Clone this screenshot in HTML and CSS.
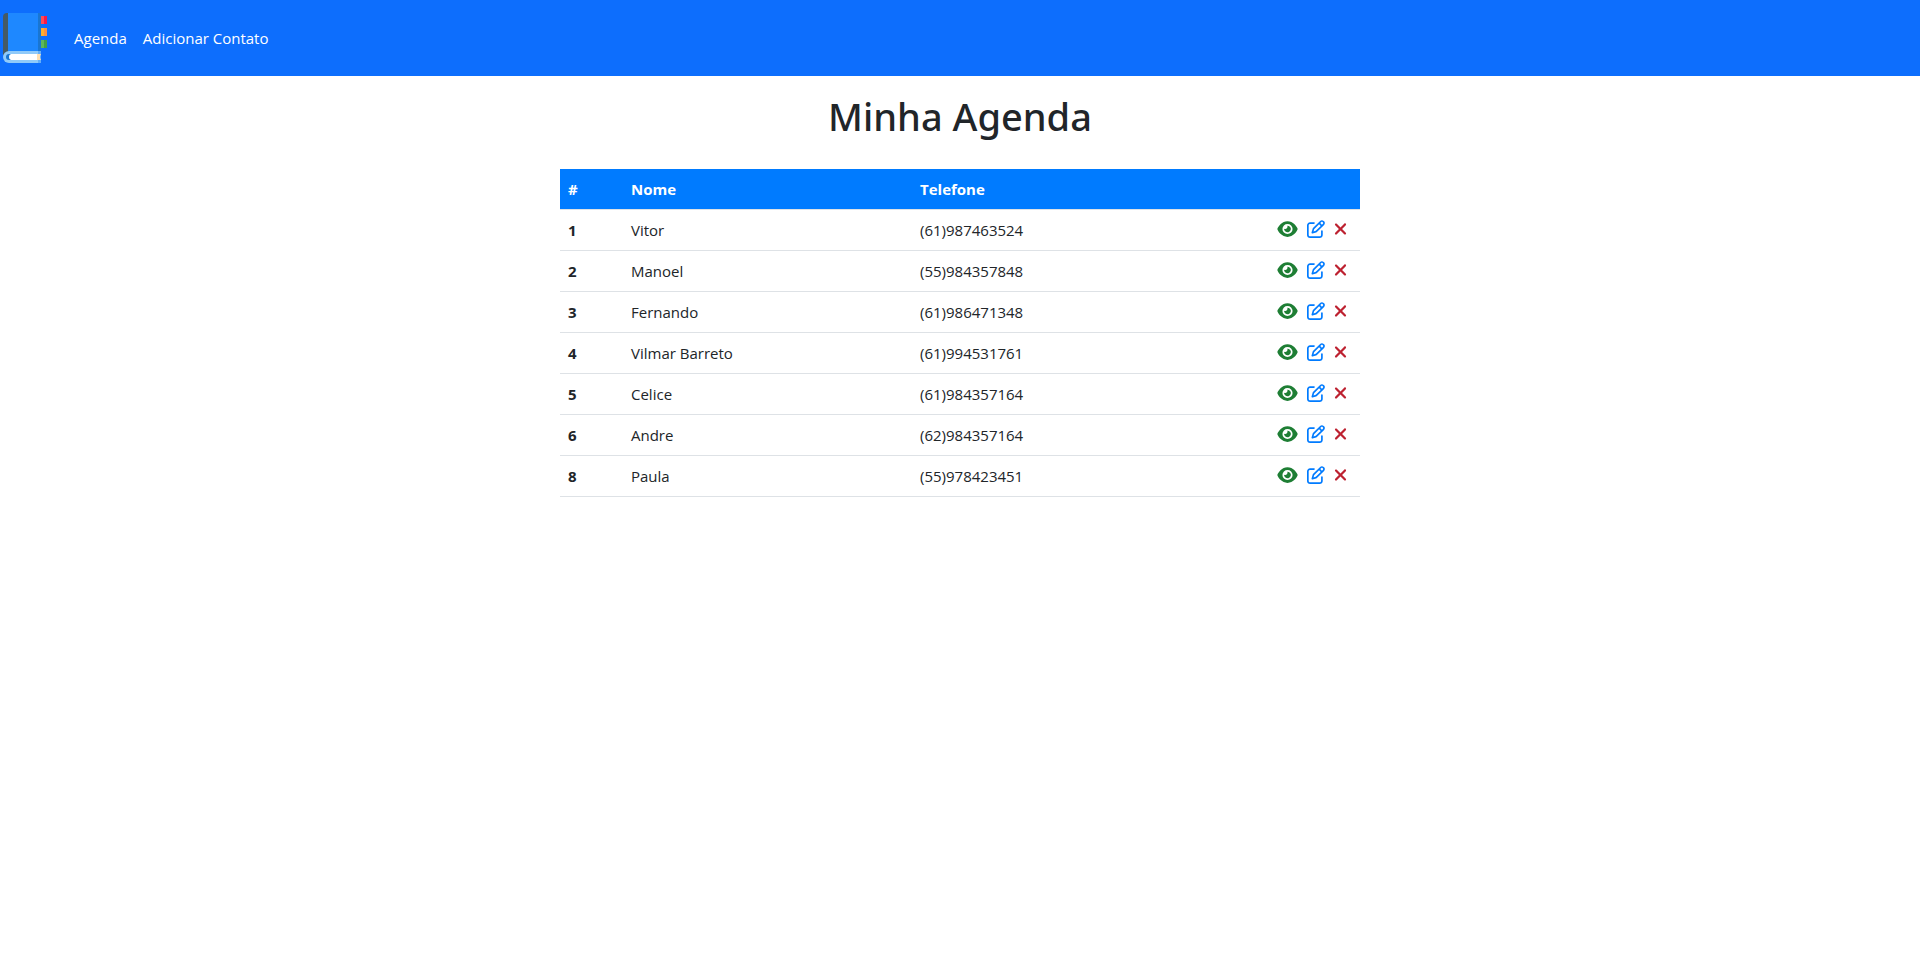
FILE: index.html
```html
<!DOCTYPE html>
<html lang="pt-br">
<head>
<meta charset="utf-8">
<meta name="viewport" content="width=device-width, initial-scale=1">
<title>Minha Agenda</title>
<link rel="stylesheet" href="styles.css">
</head>
<body>
<svg class="sprite" aria-hidden="true">
  <symbol id="eye" viewBox="0 0 576 512"><path d="M288 32c-80.8 0-145.5 36.8-192.6 80.6C48.6 156 17.3 208 2.5 243.7c-3.3 7.9-3.3 16.7 0 24.6C17.3 304 48.6 356 95.4 399.4C142.5 443.2 207.2 480 288 480s145.5-36.8 192.6-80.6c46.8-43.5 78.1-95.4 93-131.1c3.3-7.9 3.3-16.7 0-24.6c-14.9-35.7-46.2-87.7-93-131.1C433.5 68.8 368.8 32 288 32zM144 256a144 144 0 1 1 288 0 144 144 0 1 1 -288 0zm144-64c0 35.3-28.7 64-64 64c-7.1 0-13.9-1.2-20.3-3.3c-5.5-1.8-11.9 1.6-11.7 7.4c.3 6.9 1.3 13.8 3.2 20.7c13.7 51.2 66.4 81.6 117.6 67.9s81.6-66.4 67.9-117.6c-11.1-41.5-47.8-69.4-88.6-71.1c-5.8-.2-9.2 6.1-7.4 11.7c2.1 6.4 3.3 13.2 3.3 20.3z"/></symbol>
  <symbol id="edit" viewBox="0 0 512 512"><path d="M441 58.9L453.1 71c9.4 9.4 9.4 24.6 0 33.9L424 134.1 377.9 88 407 58.9c9.4-9.4 24.6-9.4 33.9 0zM209.8 256.2L344 121.9 390.1 168 255.8 302.2c-2.9 2.9-6.5 5-10.4 6.1l-58.5 16.7 16.7-58.5c1.1-3.9 3.2-7.5 6.1-10.4zM373.1 25L175.8 222.2c-8.7 8.7-15 19.4-18.3 31.1l-28.6 100c-2.4 8.4-.1 17.4 6.1 23.6s15.2 8.5 23.6 6.1l100-28.6c11.8-3.4 22.5-9.7 31.1-18.3L487 138.9c28.1-28.1 28.1-73.7 0-101.8L474.9 25C446.8-3.1 401.2-3.1 373.1 25zM88 64C39.4 64 0 103.4 0 152V424c0 48.6 39.4 88 88 88H360c48.6 0 88-39.4 88-88V312c0-13.3-10.7-24-24-24s-24 10.7-24 24V424c0 22.1-17.9 40-40 40H88c-22.1 0-40-17.9-40-40V152c0-22.1 17.9-40 40-40H200c13.3 0 24-10.7 24-24s-10.7-24-24-24H88z"/></symbol>
  <symbol id="remove" viewBox="0 0 320 512"><path d="M310.6 150.6c12.5-12.5 12.5-32.8 0-45.3s-32.8-12.5-45.3 0L160 210.7 54.6 105.4c-12.5-12.5-32.8-12.5-45.3 0s-12.5 32.8 0 45.3L114.7 256 9.4 361.4c-12.5 12.5-12.5 32.8 0 45.3s32.8 12.5 45.3 0L160 301.3 265.4 406.6c12.5 12.5 32.8 12.5 45.3 0s12.5-32.8 0-45.3L205.3 256 310.6 150.6z"/></symbol>
</svg>
<header>
  <nav class="navbar">
    <a class="brand" href="#" aria-label="Agenda">
      <svg class="logo" viewBox="0 0 50 50" aria-hidden="true">
        <path fill="#455a64" d="M7 0h2v42H3V4a4 4 0 0 1 4-4z"/>
        <path fill="#1e88ff" d="M8 0h30v42H8z"/>
        <path fill="#1976d2" d="M38 0h1a2 2 0 0 1 2 2v40h-3z"/>
        <path fill="#90caf9" d="M9 38h29v12H9a6 6 0 0 1 0-12z"/>
        <path fill="#64aef8" d="M38 38h3v12h-3z"/>
        <path fill="#1976d2" d="M9 41h4v6H9a3 3 0 0 1 0-6z"/>
        <path fill="#fff" d="M11 41h27v6H11a3 3 0 0 1-2-3 3 3 0 0 1 2-3z"/>
        <path fill="#ffe0b2" d="M37 41h4l-1 2v2l1 2h-4z"/>
        <path fill="#ff4b55" d="M41 3h3v8h-3z"/><path fill="#f5194b" d="M44 3h3v8h-3z"/>
        <path fill="#ffb02e" d="M41 15h3v8h-3z"/><path fill="#ff9140" d="M44 15h3v8h-3z"/>
        <path fill="#5cb85c" d="M41 27h3v8h-3z"/><path fill="#43a047" d="M44 27h3v8h-3z"/>
      </svg>
    </a>
    <a class="nav-link" href="#">Agenda</a>
    <a class="nav-link" href="#">Adicionar Contato</a>
  </nav>
</header>
<main class="container">
  <h1 class="title">Minha Agenda</h1>
  <table class="contacts">
    <colgroup><col class="col-id"><col class="col-name"><col class="col-phone"><col></colgroup>
    <thead>
      <tr><th scope="col">#</th><th scope="col">Nome</th><th scope="col">Telefone</th><th scope="col"></th></tr>
    </thead>
    <tbody>
      <tr><th scope="row">1</th><td>Vitor</td><td>(61)987463524</td><td><div class="actions"><a class="view" href="#" aria-label="Ver"><svg><use href="#eye"/></svg></a><a class="edit" href="#" aria-label="Editar"><svg><use href="#edit"/></svg></a><button class="delete" type="button" aria-label="Excluir"><svg><use href="#remove"/></svg></button></div></td></tr>
      <tr><th scope="row">2</th><td>Manoel</td><td>(55)984357848</td><td><div class="actions"><a class="view" href="#" aria-label="Ver"><svg><use href="#eye"/></svg></a><a class="edit" href="#" aria-label="Editar"><svg><use href="#edit"/></svg></a><button class="delete" type="button" aria-label="Excluir"><svg><use href="#remove"/></svg></button></div></td></tr>
      <tr><th scope="row">3</th><td>Fernando</td><td>(61)986471348</td><td><div class="actions"><a class="view" href="#" aria-label="Ver"><svg><use href="#eye"/></svg></a><a class="edit" href="#" aria-label="Editar"><svg><use href="#edit"/></svg></a><button class="delete" type="button" aria-label="Excluir"><svg><use href="#remove"/></svg></button></div></td></tr>
      <tr><th scope="row">4</th><td>Vilmar Barreto</td><td>(61)994531761</td><td><div class="actions"><a class="view" href="#" aria-label="Ver"><svg><use href="#eye"/></svg></a><a class="edit" href="#" aria-label="Editar"><svg><use href="#edit"/></svg></a><button class="delete" type="button" aria-label="Excluir"><svg><use href="#remove"/></svg></button></div></td></tr>
      <tr><th scope="row">5</th><td>Celice</td><td>(61)984357164</td><td><div class="actions"><a class="view" href="#" aria-label="Ver"><svg><use href="#eye"/></svg></a><a class="edit" href="#" aria-label="Editar"><svg><use href="#edit"/></svg></a><button class="delete" type="button" aria-label="Excluir"><svg><use href="#remove"/></svg></button></div></td></tr>
      <tr><th scope="row">6</th><td>Andre</td><td>(62)984357164</td><td><div class="actions"><a class="view" href="#" aria-label="Ver"><svg><use href="#eye"/></svg></a><a class="edit" href="#" aria-label="Editar"><svg><use href="#edit"/></svg></a><button class="delete" type="button" aria-label="Excluir"><svg><use href="#remove"/></svg></button></div></td></tr>
      <tr><th scope="row">8</th><td>Paula</td><td>(55)978423451</td><td><div class="actions"><a class="view" href="#" aria-label="Ver"><svg><use href="#eye"/></svg></a><a class="edit" href="#" aria-label="Editar"><svg><use href="#edit"/></svg></a><button class="delete" type="button" aria-label="Excluir"><svg><use href="#remove"/></svg></button></div></td></tr>
    </tbody>
  </table>
</main>
</body>
</html>
```
FILE: styles.css
```css
* { box-sizing: border-box; }
body {
  margin: 0;
  background: #fff;
  color: #212529;
  font: 15px/24px "Segoe UI", "Open Sans", "Noto Sans", sans-serif;
}
.sprite { display: none; }
.navbar {
  display: flex;
  align-items: center;
  padding: 8px 0;
  background: #0d6efd;
}
.brand {
  display: block;
  padding: 5px 0;
  margin-right: 16px;
}
.logo {
  display: block;
  width: 50px;
  height: 50px;
}
.nav-link {
  padding: 8px;
  color: #fff;
  text-decoration: none;
}
.container {
  max-width: 800px;
  margin: 0 auto;
}
.title {
  margin: 16px 0 29px;
  font-family: "Segoe UI", "Noto Sans", "Open Sans", sans-serif;
  font-size: 38px;
  font-weight: 500;
  line-height: 48px;
  text-align: center;
}
.contacts {
  width: 100%;
  table-layout: fixed;
  border-collapse: separate;
  border-spacing: 0;
}
.col-id { width: 63px; }
.col-name { width: 289px; }
.col-phone { width: 289px; }
.contacts th,
.contacts td {
  padding: 8px;
  border-bottom: 1px solid #dee2e6;
  text-align: left;
  vertical-align: top;
}
.contacts th { font-weight: 700; }
.contacts thead th {
  background: #007bff;
  color: #fff;
}
.actions {
  display: flex;
  justify-content: flex-end;
  gap: 9px;
  padding: 2px 5px 0 0;
}
.actions a,
.actions button {
  display: block;
  padding: 0;
  border: 0;
  background: none;
  cursor: pointer;
}
.actions svg {
  display: block;
  width: 18px;
  height: 18px;
  fill: currentColor;
}
.actions .view svg { width: 21px; }
.actions .delete svg { width: 13px; }
.view { color: #1e7e34; }
.edit { color: #007bff; }
.delete { color: #bd2130; }
```
